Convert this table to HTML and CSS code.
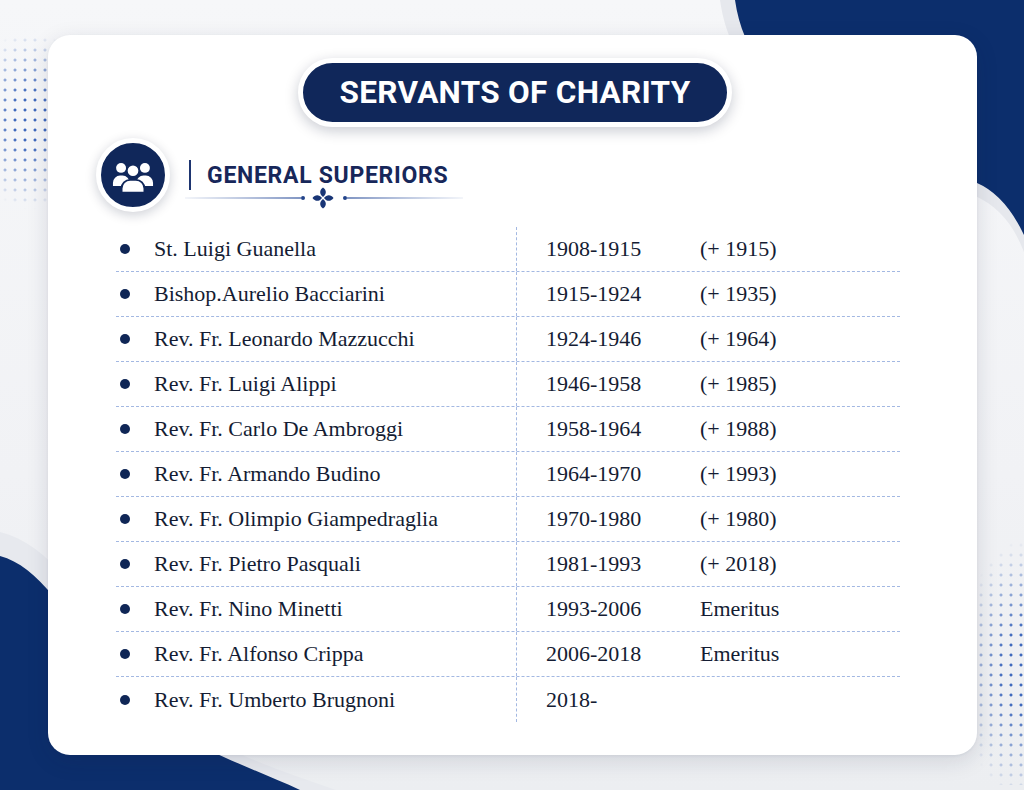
FILE: index.html
```html
<!DOCTYPE html>
<html lang="en">
<head>
<meta charset="utf-8">
<title>Servants of Charity - General Superiors</title>
<link rel="stylesheet" href="styles.css">
</head>
<body>
<div class="page">
  <svg class="bg" viewBox="0 0 1024 790" width="1024" height="790" aria-hidden="true">
    <path d="M720 0 C 736 118, 872 170, 975 196 Q 1008 210 1024 252 L1024 0 Z" fill="#e6e8ed"/>
    <path d="M735 0 C 750 110, 880 160, 977 183 Q 1005 195 1024 235 L1024 0 Z" fill="#0c2e6c"/>
    <path d="M0 532 C 50 544, 84 600, 134 672 C 186 742, 262 764, 336 790 L0 790 Z" fill="#e7e9ee"/>
    <path d="M0 556 C 38 566, 66 612, 116 682 C 168 742, 240 762, 300 790 L0 790 Z" fill="#0c2e6c"/>
  </svg>
  <div class="dots dots-left"></div>
  <div class="dots dots-right"></div>

  <main class="card">
    <div class="title-wrap">
      <h1 class="title-pill">SERVANTS OF CHARITY</h1>
    </div>

    <div class="section-head">
      <div class="icon-circle">
        <svg viewBox="0 0 44 34" width="42" height="33" aria-hidden="true">
          <circle cx="9.5" cy="8" r="5.2" fill="#fff"/>
          <path d="M1 27 v-3.5 a7.5 7.5 0 0 1 7.5 -7.5 h2.5 a7.5 7.5 0 0 1 7.5 7.5 v3.5 z" fill="#fff"/>
          <circle cx="34.5" cy="8" r="5.2" fill="#fff"/>
          <path d="M25.5 27 v-3.5 a7.5 7.5 0 0 1 7.5 -7.5 h2.5 a7.5 7.5 0 0 1 7.5 7.5 v3.5 z" fill="#fff"/>
          <circle cx="22" cy="11" r="6.6" fill="#fff" stroke="#10275a" stroke-width="2"/>
          <path d="M10 34 v-4.5 a9 9 0 0 1 9 -9 h6 a9 9 0 0 1 9 9 v4.5 z" fill="#fff" stroke="#10275a" stroke-width="2"/>
        </svg>
      </div>
      <div class="head-block">
        <div class="head-row">
          <span class="head-bar"></span>
          <h2 class="head-title">GENERAL SUPERIORS</h2>
        </div>
        <svg class="ornament" viewBox="0 0 278 22" width="278" height="22" aria-hidden="true">
          <defs>
            <linearGradient id="gl" x1="0" x2="1">
              <stop offset="0" stop-color="#3d5fa8" stop-opacity="0.1"/>
              <stop offset="1" stop-color="#2f519c"/>
            </linearGradient>
            <linearGradient id="gr" x1="0" x2="1">
              <stop offset="0" stop-color="#2f519c"/>
              <stop offset="1" stop-color="#3d5fa8" stop-opacity="0.1"/>
            </linearGradient>
          </defs>
          <rect x="0" y="10.4" width="116" height="1.2" fill="url(#gl)"/>
          <circle cx="118" cy="11" r="2" fill="#22438a"/>
          <g fill="#183576">
            <path d="M138 10 C 134 7, 134.5 3, 138 0.5 C 141.5 3, 142 7, 138 10 Z"/>
            <path d="M138 12 C 134 15, 134.5 19, 138 21.5 C 141.5 19, 142 15, 138 12 Z"/>
            <path d="M137 11 C 134 7, 130 7.5, 127.5 11 C 130 14.5, 134 15, 137 11 Z"/>
            <path d="M139 11 C 142 7, 146 7.5, 148.5 11 C 146 14.5, 142 15, 139 11 Z"/>
          </g>
          <circle cx="160" cy="11" r="2" fill="#22438a"/>
          <rect x="162" y="10.4" width="116" height="1.2" fill="url(#gr)"/>
        </svg>
      </div>
    </div>

    <div class="table">
      <div class="row"><div class="c-name"><span class="dot"></span>St. Luigi Guanella</div><div class="c-date">1908-1915</div><div class="c-status">(+ 1915)</div></div>
      <div class="row"><div class="c-name"><span class="dot"></span>Bishop.Aurelio Bacciarini</div><div class="c-date">1915-1924</div><div class="c-status">(+ 1935)</div></div>
      <div class="row"><div class="c-name"><span class="dot"></span>Rev. Fr. Leonardo Mazzucchi</div><div class="c-date">1924-1946</div><div class="c-status">(+ 1964)</div></div>
      <div class="row"><div class="c-name"><span class="dot"></span>Rev. Fr. Luigi Alippi</div><div class="c-date">1946-1958</div><div class="c-status">(+ 1985)</div></div>
      <div class="row"><div class="c-name"><span class="dot"></span>Rev. Fr. Carlo De Ambroggi</div><div class="c-date">1958-1964</div><div class="c-status">(+ 1988)</div></div>
      <div class="row"><div class="c-name"><span class="dot"></span>Rev. Fr. Armando Budino</div><div class="c-date">1964-1970</div><div class="c-status">(+ 1993)</div></div>
      <div class="row"><div class="c-name"><span class="dot"></span>Rev. Fr. Olimpio Giampedraglia</div><div class="c-date">1970-1980</div><div class="c-status">(+ 1980)</div></div>
      <div class="row"><div class="c-name"><span class="dot"></span>Rev. Fr. Pietro Pasquali</div><div class="c-date">1981-1993</div><div class="c-status">(+ 2018)</div></div>
      <div class="row"><div class="c-name"><span class="dot"></span>Rev. Fr. Nino Minetti</div><div class="c-date">1993-2006</div><div class="c-status">Emeritus</div></div>
      <div class="row"><div class="c-name"><span class="dot"></span>Rev. Fr. Alfonso Crippa</div><div class="c-date">2006-2018</div><div class="c-status">Emeritus</div></div>
      <div class="row"><div class="c-name"><span class="dot"></span>Rev. Fr. Umberto Brugnoni</div><div class="c-date">2018-</div><div class="c-status"></div></div>
    </div>
  </main>
</div>
</body>
</html>
```

FILE: styles.css
```css
* { box-sizing: border-box; }

html, body {
  margin: 0;
  padding: 0;
}

body {
  width: 1024px;
  height: 790px;
  overflow: hidden;
  background: linear-gradient(180deg, #f6f7f9 0%, #f1f2f5 60%, #eceef1 100%);
  font-family: "Liberation Serif", "Times New Roman", serif;
  color: #141c33;
}

.page {
  position: relative;
  width: 1024px;
  height: 790px;
  padding: 35px 0 0 48px;
}

.bg {
  position: absolute;
  left: 0;
  top: 0;
  z-index: 0;
}

.dots {
  position: absolute;
  z-index: 0;
  background-image: radial-gradient(circle, #3f69bd 1.2px, transparent 1.8px);
  background-size: 10px 10px;
}

.dots-left {
  left: 0;
  top: 25px;
  width: 60px;
  height: 190px;
  -webkit-mask-image: radial-gradient(ellipse 60px 90px at 30px 95px, #000 30%, transparent 100%);
  mask-image: radial-gradient(ellipse 60px 90px at 30px 95px, #000 30%, transparent 100%);
}

.dots-right {
  left: 966px;
  top: 520px;
  width: 58px;
  height: 265px;
  -webkit-mask-image: radial-gradient(ellipse 60px 130px at 55px 150px, #000 30%, transparent 100%);
  mask-image: radial-gradient(ellipse 60px 130px at 55px 150px, #000 30%, transparent 100%);
}

.card {
  position: relative;
  z-index: 1;
  width: 929px;
  height: 720px;
  background: #ffffff;
  border-radius: 22px;
  box-shadow: 0 6px 22px rgba(20, 30, 60, 0.13), 0 1px 3px rgba(20, 30, 60, 0.06);
  padding: 23px 0 0 0;
}

.title-wrap {
  display: flex;
  justify-content: center;
  padding-left: 5px;
}

.title-pill {
  margin: 0;
  width: 434px;
  height: 69px;
  border: 5px solid #ffffff;
  border-radius: 40px;
  background: #10275a;
  box-shadow: 0 4px 14px rgba(10, 20, 50, 0.22);
  color: #ffffff;
  font-family: Roboto, "Liberation Sans", sans-serif;
  font-weight: 700;
  font-size: 31.5px;
  letter-spacing: 0.3px;
  display: flex;
  align-items: center;
  justify-content: center;
}

.section-head {
  display: flex;
  align-items: flex-start;
  margin-top: 11px;
  padding-left: 48px;
}

.icon-circle {
  width: 74px;
  height: 74px;
  border-radius: 50%;
  border: 5px solid #ffffff;
  background: #10275a;
  box-shadow: 0 3px 12px rgba(10, 20, 50, 0.2);
  display: flex;
  align-items: center;
  justify-content: center;
  flex: none;
}

.icon-circle svg {
  display: block;
  margin-top: 2px;
}

.head-block {
  margin-left: 15px;
  margin-top: 22px;
  display: flex;
  flex-direction: column;
}

.head-row {
  display: flex;
  align-items: center;
  height: 30px;
}

.head-bar {
  width: 2px;
  height: 30px;
  background: #1e3570;
  margin-left: 4px;
}

.head-title {
  margin: 0 0 0 16px;
  font-family: Roboto, "Liberation Sans", sans-serif;
  font-weight: 700;
  font-size: 23px;
  color: #17275a;
  letter-spacing: 0.7px;
}

.ornament {
  display: block;
  margin-top: -3px;
}

.table {
  margin: 15px 0 0 68px;
  width: 784px;
}

.row {
  display: grid;
  grid-template-columns: 400px 184px 1fr;
  height: 45px;
  border-bottom: 1px dashed #a3b8e2;
}

.row:last-child {
  border-bottom: none;
}

.c-name, .c-date, .c-status {
  display: flex;
  align-items: center;
  font-size: 22px;
  color: #141c33;
  white-space: nowrap;
}

.c-name {
  padding-left: 4px;
}

.dot {
  width: 10px;
  height: 10px;
  border-radius: 50%;
  background: #0f2656;
  margin-right: 24px;
  flex: none;
}

.c-date {
  border-left: 1px dashed #a3b8e2;
  padding-left: 29px;
}
```
